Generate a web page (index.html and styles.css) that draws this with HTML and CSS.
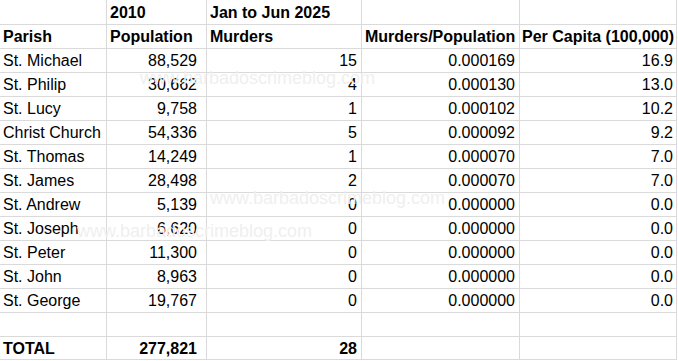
FILE: index.html
```html
<!DOCTYPE html>
<html lang="en">
<head>
<meta charset="utf-8">
<title>Parish Murders 2025</title>
<link rel="stylesheet" href="styles.css">
</head>
<body>
<div class="sheet">
  <div class="cell first"></div>
  <div class="cell first b">2010</div>
  <div class="cell first b">Jan to Jun 2025</div>
  <div class="cell first"></div>
  <div class="cell first"></div>

  <div class="cell b">Parish</div>
  <div class="cell b">Population</div>
  <div class="cell b">Murders</div>
  <div class="cell b">Murders/Population</div>
  <div class="cell b tight">Per Capita (100,000)</div>

  <div class="cell">St. Michael</div><div class="cell pop">88,529</div><div class="cell num">15</div><div class="cell num">0.000169</div><div class="cell rate">16.9</div>
  <div class="cell">St. Philip</div><div class="cell pop">30,662</div><div class="cell num">4</div><div class="cell num">0.000130</div><div class="cell rate">13.0</div>
  <div class="cell">St. Lucy</div><div class="cell pop">9,758</div><div class="cell num">1</div><div class="cell num">0.000102</div><div class="cell rate">10.2</div>
  <div class="cell">Christ Church</div><div class="cell pop">54,336</div><div class="cell num">5</div><div class="cell num">0.000092</div><div class="cell rate">9.2</div>
  <div class="cell">St. Thomas</div><div class="cell pop">14,249</div><div class="cell num">1</div><div class="cell num">0.000070</div><div class="cell rate">7.0</div>
  <div class="cell">St. James</div><div class="cell pop">28,498</div><div class="cell num">2</div><div class="cell num">0.000070</div><div class="cell rate">7.0</div>
  <div class="cell">St. Andrew</div><div class="cell pop">5,139</div><div class="cell num">0</div><div class="cell num">0.000000</div><div class="cell rate">0.0</div>
  <div class="cell">St. Joseph</div><div class="cell pop">6,620</div><div class="cell num">0</div><div class="cell num">0.000000</div><div class="cell rate">0.0</div>
  <div class="cell">St. Peter</div><div class="cell pop">11,300</div><div class="cell num">0</div><div class="cell num">0.000000</div><div class="cell rate">0.0</div>
  <div class="cell">St. John</div><div class="cell pop">8,963</div><div class="cell num">0</div><div class="cell num">0.000000</div><div class="cell rate">0.0</div>
  <div class="cell">St. George</div><div class="cell pop">19,767</div><div class="cell num">0</div><div class="cell num">0.000000</div><div class="cell rate">0.0</div>

  <div class="cell"></div><div class="cell"></div><div class="cell"></div><div class="cell"></div><div class="cell"></div>

  <div class="cell b">TOTAL</div><div class="cell pop b">277,821</div><div class="cell num b">28</div><div class="cell"></div><div class="cell"></div>

  <span class="mark mark-1">www.barbadoscrimeblog.com</span>
  <span class="mark mark-2">www.barbadoscrimeblog.com</span>
  <span class="mark mark-3">www.barbadoscrimeblog.com</span>
</div>
</body>
</html>
```

FILE: styles.css
```css
html, body {
  margin: 0;
  padding: 0;
  background: #ffffff;
}

.sheet {
  position: relative;
  display: grid;
  grid-template-columns: 107px 100px 155px 158px 157px;
  grid-template-rows: 25px repeat(13, 24px) 23px;
  width: 677px;
  font-family: "Liberation Sans", Arial, sans-serif;
  font-size: 16px;
  color: #000000;
}

.cell {
  box-sizing: border-box;
  border-right: 1px solid #dadada;
  border-bottom: 1px solid #dadada;
  padding: 1px 3px 0;
  line-height: 22px;
  white-space: nowrap;
  overflow: visible;
}

.cell.first {
  padding-top: 2px;
}

.b {
  font-weight: bold;
}

.tight {
  padding-left: 2px;
}

.pop {
  text-align: right;
  padding-right: 9px;
}

.num {
  text-align: right;
  padding-right: 4px;
}

.rate {
  text-align: right;
  padding-right: 3px;
}

.mark {
  position: absolute;
  font-family: "Liberation Sans", Arial, sans-serif;
  font-size: 18px;
  line-height: 21px;
  color: #efefef;
  white-space: nowrap;
  pointer-events: none;
}

.mark-1 {
  left: 140px;
  top: 68px;
}

.mark-2 {
  left: 210px;
  top: 188px;
}

.mark-3 {
  left: 77px;
  top: 221px;
}
```
